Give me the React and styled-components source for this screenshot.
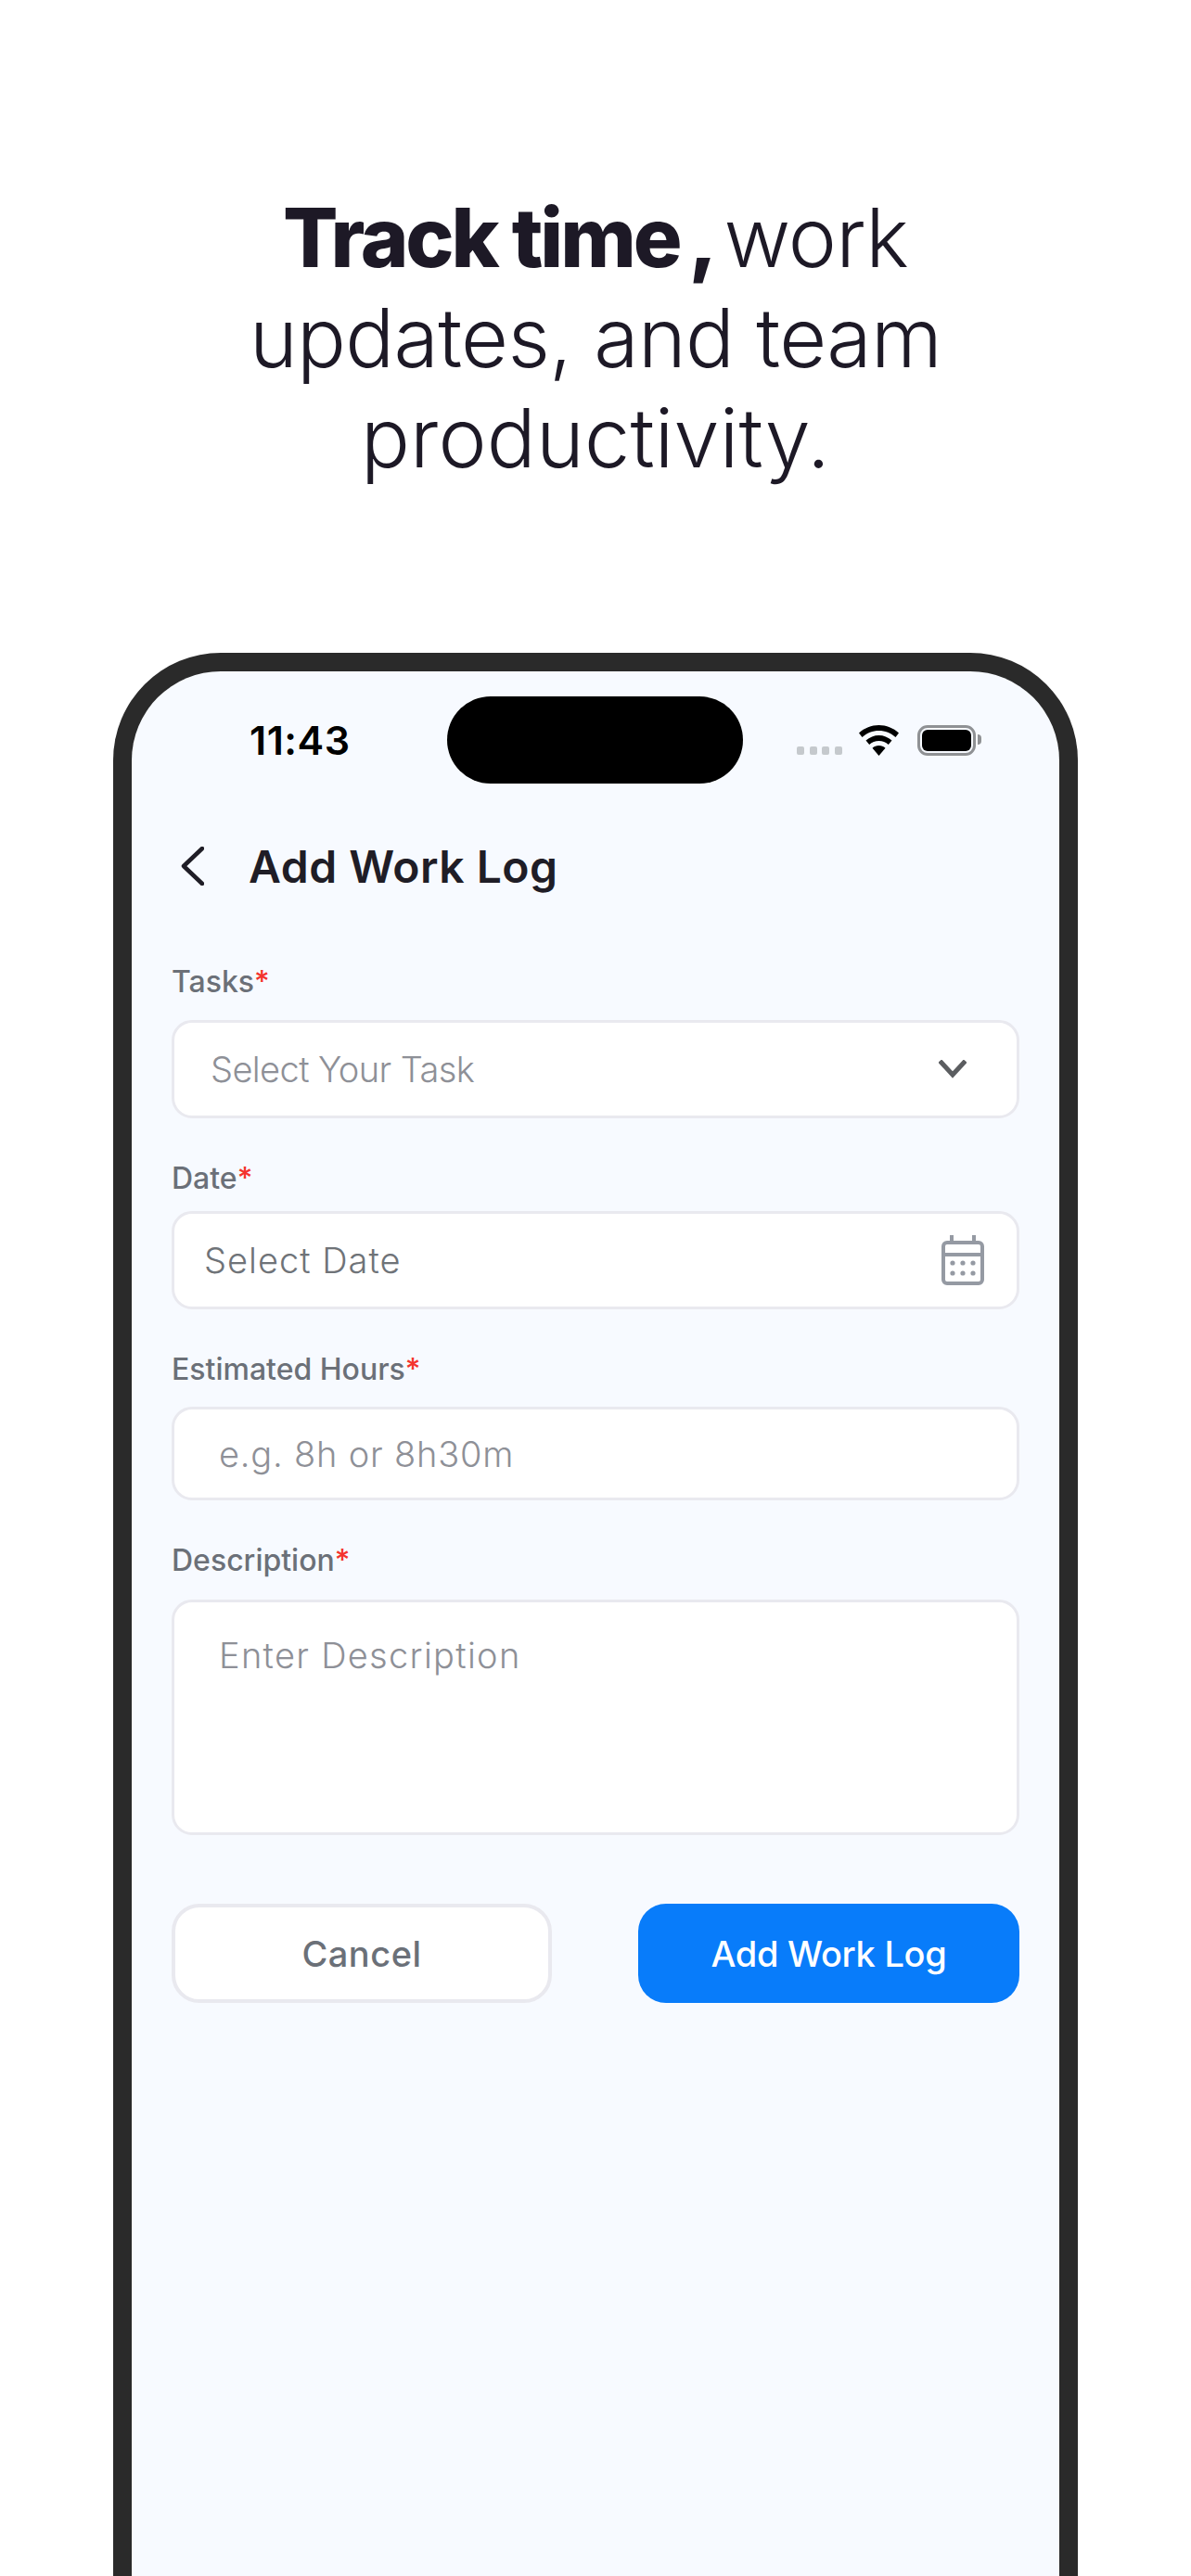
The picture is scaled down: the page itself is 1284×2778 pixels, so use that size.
import React from "react";
import styled, { createGlobalStyle } from "styled-components";

const GlobalStyle = createGlobalStyle`
  html, body {
    margin: 0;
    padding: 0;
    background: #ffffff;
  }
  * {
    box-sizing: border-box;
  }
`;

const Page = styled.div`
  width: 1284px;
  height: 2778px;
  overflow: hidden;
  display: flex;
  flex-direction: column;
  align-items: center;
  font-family: Inter, "Noto Sans", sans-serif;
  background: #ffffff;
`;

const Headline = styled.h1`
  margin: 202px 0 0;
  font-size: 88px;
  line-height: 108px;
  font-weight: 300;
  text-align: center;
  color: #1d1926;
  strong {
    font-weight: 800;
    letter-spacing: -3.1px;
    word-spacing: 0;
  }
`;

const HeadLine = styled.span`
  display: block;
  letter-spacing: ${(p) => p.$spacing}px;
  word-spacing: ${(p) => p.$words || 0}px;
`;

const Phone = styled.div`
  flex: 1;
  width: 1040px;
  margin-top: 178px;
  border: 20px solid #2a2a2a;
  border-bottom: none;
  border-radius: 116px 116px 0 0;
  background: #f7faff;
  padding: 0 43px;
`;

const StatusBar = styled.div`
  display: grid;
  grid-template-columns: 297px 319px 1fr;
  align-items: center;
  margin-top: 27px;
  height: 94px;
`;

const Clock = styled.div`
  padding-left: 84px;
  font-size: 43px;
  font-weight: 600;
  letter-spacing: 0.5px;
  color: #000000;
`;

const Island = styled.div`
  height: 94px;
  background: #000000;
  border-radius: 47px;
`;

const StatusIcons = styled.div`
  display: flex;
  align-items: flex-end;
  padding-left: 58px;
`;

const Signal = styled.div`
  display: flex;
  gap: 5.6px;
  margin-right: 18px;
  margin-bottom: 1px;
`;

const SignalDot = styled.i`
  width: 8px;
  height: 9px;
  border-radius: 2px;
  background: #c5c9cd;
`;

const Battery = styled.div`
  position: relative;
  width: 63px;
  height: 33px;
  margin-left: 20px;
  padding: 2px;
  border: 3px solid #8f9194;
  border-radius: 11px;
  &::after {
    content: "";
    position: absolute;
    top: 7px;
    right: -9px;
    width: 4px;
    height: 11px;
    background: #8f9194;
    border-radius: 0 4px 4px 0;
  }
`;

const BatteryFill = styled.div`
  height: 100%;
  background: #000000;
  border-radius: 6px;
`;

const Header = styled.div`
  display: flex;
  align-items: center;
  height: 60px;
  margin-top: 59px;
  padding-left: 9px;
  gap: 48px;
`;

const Title = styled.div`
  font-size: 48px;
  font-weight: 600;
  letter-spacing: 0.5px;
  color: #1f1d26;
`;

const Form = styled.div`
  display: flex;
  flex-direction: column;
  gap: 45px;
  margin-top: 75px;
`;

const Field = styled.div`
  display: flex;
  flex-direction: column;
  gap: ${(p) => p.$gap}px;
`;

const Label = styled.div`
  font-size: 32px;
  line-height: 40px;
  font-weight: 500;
  letter-spacing: 0;
  color: #6b7078;
  b {
    font-weight: 500;
    color: #f4332d;
  }
`;

const Box = styled.div`
  display: flex;
  align-items: ${(p) => (p.$top ? "flex-start" : "center")};
  justify-content: space-between;
  height: ${(p) => p.$height}px;
  padding: ${(p) => (p.$top ? "34px" : "0")} ${(p) => p.$end || 0}px 0 ${(p) => p.$inset}px;
  background: #ffffff;
  border: 3px solid #e9e9ef;
  border-radius: 22px;
`;

const Placeholder = styled.span`
  font-size: 38px;
  line-height: 46px;
  font-weight: 300;
  letter-spacing: ${(p) => p.$spacing}px;
  color: ${(p) => p.$color || "#8e9097"};
`;

const Actions = styled.div`
  display: flex;
  justify-content: space-between;
  margin-top: 74px;
`;

const Button = styled.div`
  display: flex;
  align-items: center;
  justify-content: center;
  height: 107px;
  width: ${(p) => p.$width}px;
  font-size: 38px;
  font-weight: 500;
  letter-spacing: ${(p) => p.$spacing}px;
  border-radius: 30px;
  color: ${(p) => (p.$primary ? "#ffffff" : "#6b7078")};
  background: ${(p) => (p.$primary ? "#087cfa" : "#ffffff")};
  border: ${(p) => (p.$primary ? "none" : "4px solid #e9e9ef")};
`;

const Wifi = () => (
  <svg width="43" height="33" viewBox="0 0 43 33">
    <path d="M21.5 0C13.5 0 6 3 0 8.5l3.5 4.5C8.5 8.5 14.8 6 21.5 6S34.500 8.500 39.500 13L43 8.500C37 3 29.500 0 21.500 0Z" fill="#000" />
    <path d="M21.500 11C16.500 11 11.500 13 7.500 16.500l3.700 4.500c2.800-2.500 6.500-4 10.300-4s7.500 1.500 10.300 4l3.700-4.500C31.500 13 26.500 11 21.500 11Z" fill="#000" />
    <path d="M21.500 22c-2.700 0-5.200 1-7 2.700L21.500 33l7-8.300c-1.800-1.700-4.300-2.700-7-2.700Z" fill="#000" />
  </svg>
);

const ChevronLeft = () => (
  <svg width="26" height="42" viewBox="0 0 26 42" fill="none">
    <path d="M24 2 4 21l20 19" stroke="#1f1d26" strokeWidth="4.500" strokeLinecap="round" strokeLinejoin="round" />
  </svg>
);

const ChevronDown = () => (
  <svg width="30" height="20" viewBox="0 0 30 20" fill="none">
    <path d="M3 3l12 13L27 3" stroke="#5b5d60" strokeWidth="5" strokeLinecap="square" />
  </svg>
);

const CalendarIcon = () => (
  <svg width="46" height="54" viewBox="0 0 46 54" fill="none">
    <rect x="2" y="8" width="42" height="44" rx="4" stroke="#959aa3" strokeWidth="4" />
    <path d="M2 21h42M11 0v8M35 0v8" stroke="#959aa3" strokeWidth="4" />
    {[12, 23, 34].map((x) =>
      [30, 41].map((y) => <circle key={`${x}-${y}`} cx={x} cy={y} r="2.600" fill="#959aa3" />)
    )}
  </svg>
);

export default function App() {
  return (
    <Page>
      <GlobalStyle />
      <Headline>
        <HeadLine $spacing={-0.7} $words={-14}>
          <strong>Track time</strong> <strong>,</strong> work
        </HeadLine>
        <HeadLine $spacing={-0.7}>updates, and team</HeadLine>
        <HeadLine $spacing={0.2}>productivity.</HeadLine>
      </Headline>
      <Phone>
        <StatusBar>
          <Clock>11:43</Clock>
          <Island />
          <StatusIcons>
            <Signal>
              <SignalDot />
              <SignalDot />
              <SignalDot />
              <SignalDot />
            </Signal>
            <Wifi />
            <Battery>
              <BatteryFill />
            </Battery>
          </StatusIcons>
        </StatusBar>
        <Header>
          <ChevronLeft />
          <Title>Add Work Log</Title>
        </Header>
        <Form>
          <Field $gap={21}>
            <Label>
              Tasks<b>*</b>
            </Label>
            <Box $height={106} $inset={39} $end={54}>
              <Placeholder $spacing={-0.6}>Select Your Task</Placeholder>
              <ChevronDown />
            </Box>
          </Field>
          <Field $gap={15}>
            <Label>
              Date<b>*</b>
            </Label>
            <Box $height={106} $inset={32} $end={35}>
              <Placeholder $spacing={1} $color="#6f7378">Select Date</Placeholder>
              <CalendarIcon />
            </Box>
          </Field>
          <Field $gap={20}>
            <Label>
              Estimated Hours<b>*</b>
            </Label>
            <Box $height={101} $inset={48}>
              <Placeholder $spacing={0.8}>e.g. 8h or 8h30m</Placeholder>
            </Box>
          </Field>
          <Field $gap={22}>
            <Label>
              Description<b>*</b>
            </Label>
            <Box $height={254} $inset={48} $top>
              <Placeholder $spacing={1.3}>Enter Description</Placeholder>
            </Box>
          </Field>
        </Form>
        <Actions>
          <Button $width={410} $spacing={0.5}>Cancel</Button>
          <Button $width={411} $spacing={-0.3} $primary>Add Work Log</Button>
        </Actions>
      </Phone>
    </Page>
  );
}
